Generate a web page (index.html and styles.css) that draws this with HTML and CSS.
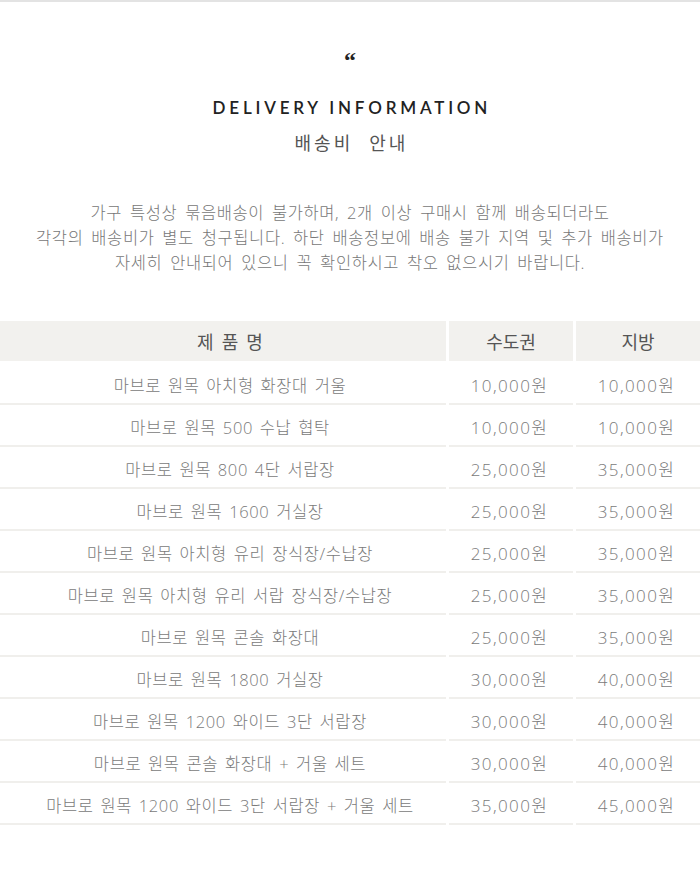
FILE: index.html
```html
<!DOCTYPE html>
<html lang="ko">
<head>
<meta charset="utf-8">
<link rel="stylesheet" href="styles.css">
</head>
<body>
<div class="page">
  <div class="intro">
    <div class="quote">&ldquo;</div>
    <h1 class="title">DELIVERY INFORMATION</h1>
    <h2 class="subtitle">배송비&nbsp; 안내</h2>
    <p class="desc">가구 특성상 묶음배송이 불가하며, 2개 이상 구매시 함께 배송되더라도<br>각각의 배송비가 별도 청구됩니다. 하단 배송정보에 배송 불가 지역 및 추가 배송비가<br>자세히 안내되어 있으니 꼭 확인하시고 착오 없으시기 바랍니다.</p>
  </div>
  <table class="fee">
    <thead>
      <tr><th class="c-name">제 품 명</th><th class="c-price">수도권</th><th class="c-price">지방</th></tr>
    </thead>
    <tbody>
      <tr><td class="name">마브로 원목 아치형 화장대 거울</td><td class="price">10,000원</td><td class="price">10,000원</td></tr>
      <tr><td class="name">마브로 원목 500 수납 협탁</td><td class="price">10,000원</td><td class="price">10,000원</td></tr>
      <tr><td class="name">마브로 원목 800 4단 서랍장</td><td class="price">25,000원</td><td class="price">35,000원</td></tr>
      <tr><td class="name">마브로 원목 1600 거실장</td><td class="price">25,000원</td><td class="price">35,000원</td></tr>
      <tr><td class="name">마브로 원목 아치형 유리 장식장/수납장</td><td class="price">25,000원</td><td class="price">35,000원</td></tr>
      <tr><td class="name">마브로 원목 아치형 유리 서랍 장식장/수납장</td><td class="price">25,000원</td><td class="price">35,000원</td></tr>
      <tr><td class="name">마브로 원목 콘솔 화장대</td><td class="price">25,000원</td><td class="price">35,000원</td></tr>
      <tr><td class="name">마브로 원목 1800 거실장</td><td class="price">30,000원</td><td class="price">40,000원</td></tr>
      <tr><td class="name">마브로 원목 1200 와이드 3단 서랍장</td><td class="price">30,000원</td><td class="price">40,000원</td></tr>
      <tr><td class="name">마브로 원목 콘솔 화장대 + 거울 세트</td><td class="price">30,000원</td><td class="price">40,000원</td></tr>
      <tr><td class="name">마브로 원목 1200 와이드 3단 서랍장 + 거울 세트</td><td class="price">35,000원</td><td class="price">45,000원</td></tr>
    </tbody>
  </table>
</div>
</body>
</html>
```

FILE: styles.css
```css
html, body {
  margin: 0;
  padding: 0;
  background: #fff;
  overflow-x: hidden;
}
body {
  font-family: "Noto Sans CJK KR", "Noto Sans", sans-serif;
  width: 700px;
}
.page {
  border-top: 2px solid #e3e3e3;
}
.intro {
  text-align: center;
  padding-top: 48px;
}
.quote {
  font-family: "Liberation Serif", serif;
  font-size: 24px;
  line-height: 20px;
  height: 20px;
  color: #222;
  font-weight: bold;
}
.title {
  margin: 26px 0 0;
  font-family: "Lato", sans-serif;
  font-weight: 600;
  font-size: 17px;
  letter-spacing: 3.8px;
  text-indent: 3.8px;
  line-height: 24px;
  color: #222;
}
.subtitle {
  margin: 9px 0 0;
  font-weight: 400;
  font-size: 18px;
  letter-spacing: 3px;
  text-indent: 3px;
  line-height: 26px;
  color: #555;
}
.desc {
  margin: 45px 0 0;
  font-family: "Open Sans", "Noto Sans CJK KR", sans-serif;
  font-size: 16.5px;
  font-weight: 300;
  line-height: 25px;
  letter-spacing: 0.6px;
  word-spacing: 3px;
  color: #777;
}
.fee {
  margin: 43px 0 0 -3px;
  width: 706px;
  border-collapse: separate;
  border-spacing: 3px;
  table-layout: fixed;
}
.fee th {
  background: #f2f1ee;
  height: 40px;
  padding: 0;
  border-bottom: 2px solid #fff;
  font-weight: 400;
  font-size: 18px;
  word-spacing: 3px;
  color: #555;
}
.fee th.c-name { width: 432px; padding-left: 14px; }
.fee th.c-price { width: 124px; }
.fee td {
  height: 37px;
  padding: 0;
  border-bottom: 2px solid #f0efec;
  text-align: center;
  font-family: "Open Sans", "Noto Sans CJK KR", sans-serif;
  font-size: 16.5px;
  font-weight: 300;
  letter-spacing: 0.6px;
  word-spacing: 2px;
  color: #7a7a7a;
}
.fee td.name {
  padding-left: 14px;
}
.fee td.price {
  font-size: 17px;
  letter-spacing: 1.4px;
  word-spacing: 0;
  padding-right: 3px;
}
```
